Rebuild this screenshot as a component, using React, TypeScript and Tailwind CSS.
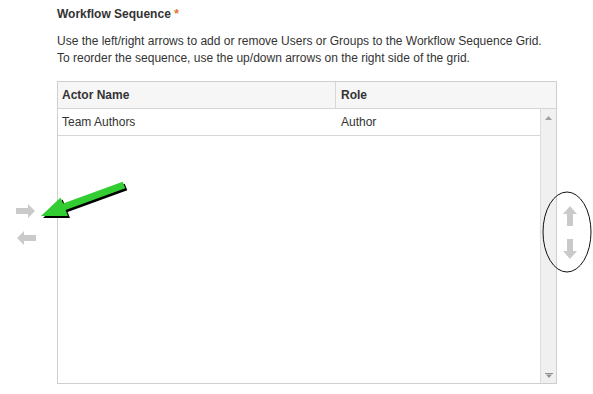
import React from "react";

function RightArrow() {
  return (
    <svg width="20" height="14" viewBox="0 0 20 14">
      <polygon points="0,4 12,4 12,0 19,7 12,14 12,10 0,10" fill="#cacaca" />
    </svg>
  );
}
function LeftArrow() {
  return (
    <svg width="20" height="14" viewBox="0 0 20 14">
      <polygon points="20,4 8,4 8,0 1,7 8,14 8,10 20,10" fill="#cacaca" />
    </svg>
  );
}
function UpArrow() {
  return (
    <svg width="14" height="20" viewBox="0 0 14 20">
      <polygon points="7,0 14,8 10,8 10,20 4,20 4,8 0,8" fill="#cacaca" />
    </svg>
  );
}
function DownArrow() {
  return (
    <svg width="14" height="20" viewBox="0 0 14 20">
      <polygon points="4,0 10,0 10,12 14,12 7,20 0,12 4,12" fill="#cacaca" />
    </svg>
  );
}

export default function App() {
  return (
    <div className="relative w-[593px] h-[394px] overflow-hidden bg-white font-['Liberation_Sans',Arial,sans-serif] text-[12px] text-[#333]">
      <div className="pl-[57px] pt-[6px]">
        <div className="font-bold leading-[16px] text-[#333]">
          Workflow Sequence <span className="text-[#e8702a]">*</span>
        </div>
        <div className="mt-[11px] leading-[17px]">
          <div>Use the left/right arrows to add or remove Users or Groups to the Workflow Sequence Grid.</div>
          <div>To reorder the sequence, use the up/down arrows on the right side of the grid.</div>
        </div>
      </div>
      <div className="flex mt-[14px]">
        <div className="w-[57px] flex flex-col pl-[16px] pt-[123px] gap-[13px]">
          <RightArrow />
          <LeftArrow />
        </div>
        <div className="w-[500px] h-[303px] border border-[#cfcfcf] flex flex-col">
          <div className="h-[27px] flex bg-[#f6f6f6] border-b border-[#d6d6d6] font-bold">
            <div className="w-[278px] border-r border-[#d6d6d6] pl-[4px] flex items-center">Actor Name</div>
            <div className="flex-1 pl-[5px] flex items-center">Role</div>
          </div>
          <div className="flex-1 flex">
            <div className="flex-1">
              <div className="h-[27px] flex border-b border-[#d6d6d6]">
                <div className="w-[279px] pl-[4px] flex items-center">Team Authors</div>
                <div className="flex-1 pl-[4px] flex items-center">Author</div>
              </div>
            </div>
            <div className="w-[16px] bg-[#f0f0f0] border-l border-[#dcdcdc] flex flex-col items-center justify-between pt-[7px] pb-[5px]">
              <svg width="7" height="4" viewBox="0 0 7 4">
                <polygon points="3.5,0 7,4 0,4" fill="#a0a0a0" />
              </svg>
              <svg width="8" height="5" viewBox="0 0 8 5">
                <rect x="0" y="0" width="8" height="1" fill="#909090" />
                <polygon points="1,1.5 7,1.5 4,5" fill="#909090" />
              </svg>
            </div>
          </div>
        </div>
        <div className="pl-[6px] pt-[125px] flex flex-col gap-[13px]">
          <UpArrow />
          <DownArrow />
        </div>
      </div>
      <svg className="absolute left-0 top-0 pointer-events-none" width="593" height="394" viewBox="0 0 593 394">
        <g transform="translate(2,2)">
          <polygon points="41,216 68,216.1 65.6,210.1 125.3,188.3 122.7,181.7 63,203.5 60.6,197.5" fill="#000" />
        </g>
        <polygon points="41,216 68,216.1 65.6,210.1 125.3,188.3 122.7,181.7 63,203.5 60.6,197.5" fill="#33cc33" />
        <ellipse cx="567" cy="232" rx="24" ry="40" fill="none" stroke="#111" strokeWidth="1" />
      </svg>
    </div>
  );
}
